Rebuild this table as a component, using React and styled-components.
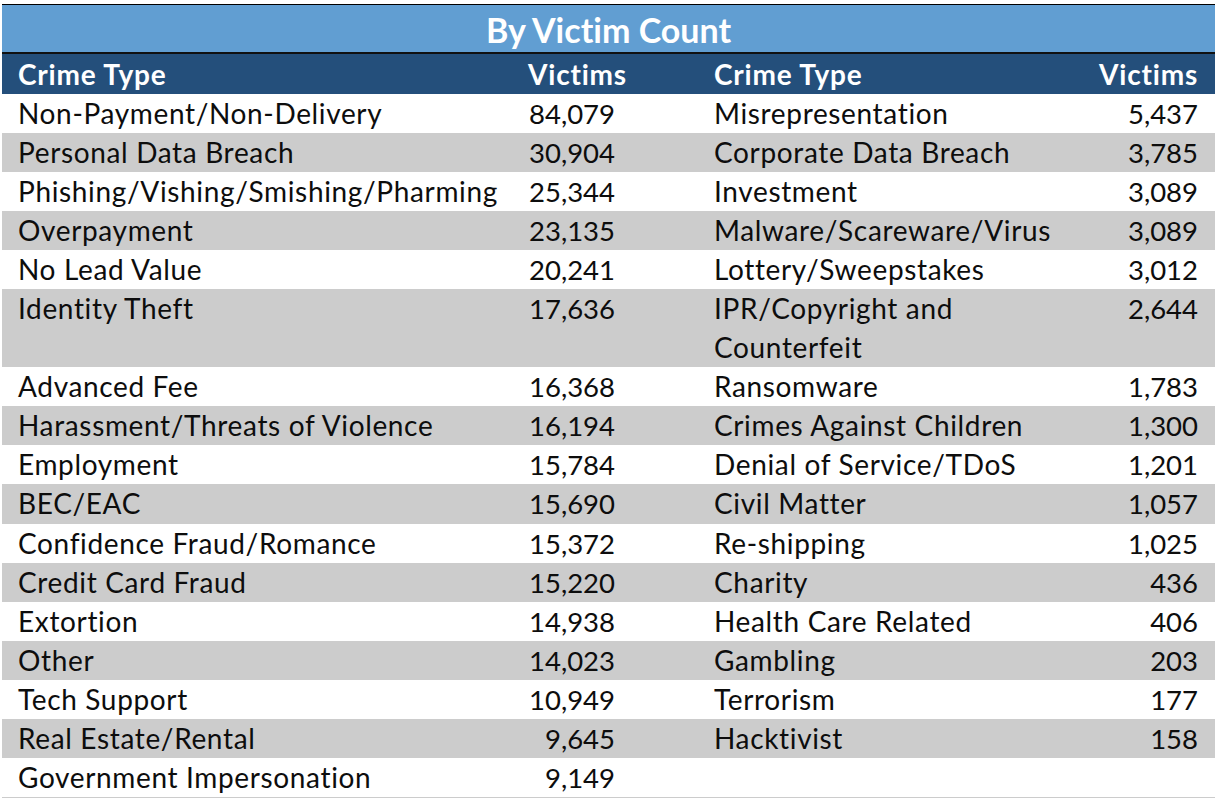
import React from "react";
import styled, { createGlobalStyle } from "styled-components";

const GlobalStyle = createGlobalStyle`
  html, body {
    margin: 0;
    padding: 0;
    background: #ffffff;
  }
  body {
    font-family: "Lato", "Open Sans", sans-serif;
    font-variant-ligatures: none;
    color: #0d0d0d;
  }
`;

const Page = styled.div`
  width: 1218px;
  height: 798px;
  overflow: hidden;
  padding: 4px 3px 0 2px;
  box-sizing: border-box;
`;

const Title = styled.div`
  height: 44.5px;
  border-top: 1.5px solid #000;
  border-bottom: 2px solid #111;
  background: #619ed2;
  color: #fff;
  font-weight: 700;
  font-size: 34px;
  display: flex;
  align-items: center;
  justify-content: center;
  padding-top: 2px;
  box-sizing: content-box;
`;

const Row = styled.div`
  display: grid;
  grid-template-columns: 518px 186px 1fr 130px;
  height: ${(p) => (p.$tall ? 78.2 : 39.1)}px;
  line-height: 39.1px;
  font-size: 28px;
  letter-spacing: 0.65px;
  background: ${(p) => (p.$grey ? "#cccccc" : "#ffffff")};
`;

const HeadRow = styled(Row)`
  height: 40px;
  line-height: 40px;
  background: #244f7b;
  color: #fff;
  font-weight: 700;
  font-size: 28px;
  letter-spacing: 0.8px;
`;

const Name = styled.div`
  padding-left: ${(p) => (p.$right ? 8 : 16)}px;
  white-space: nowrap;
`;

const Count = styled.div`
  padding-left: 8px;
  white-space: nowrap;
`;

const Num = styled.div`
  width: 87px;
  text-align: right;
  letter-spacing: 0;
  font-size: 27.5px;
`;

const CountRight = styled.div`
  text-align: right;
  padding-right: 17px;
  white-space: nowrap;
  letter-spacing: ${(p) => (p.$head ? "0.8px" : "0")};
  font-size: ${(p) => (p.$head ? 28 : 27.5)}px;
`;

const left = [
  ["Non-Payment/Non-Delivery", "84,079"],
  ["Personal Data Breach", "30,904"],
  ["Phishing/Vishing/Smishing/Pharming", "25,344"],
  ["Overpayment", "23,135"],
  ["No Lead Value", "20,241"],
  ["Identity Theft", "17,636"],
  ["Advanced Fee", "16,368"],
  ["Harassment/Threats of Violence", "16,194"],
  ["Employment", "15,784"],
  ["BEC/EAC", "15,690"],
  ["Confidence Fraud/Romance", "15,372"],
  ["Credit Card Fraud", "15,220"],
  ["Extortion", "14,938"],
  ["Other", "14,023"],
  ["Tech Support", "10,949"],
  ["Real Estate/Rental", "9,645"],
  ["Government Impersonation", "9,149"],
];

const right = [
  ["Misrepresentation", "5,437"],
  ["Corporate Data Breach", "3,785"],
  ["Investment", "3,089"],
  ["Malware/Scareware/Virus", "3,089"],
  ["Lottery/Sweepstakes", "3,012"],
  [["IPR/Copyright and", "Counterfeit"], "2,644"],
  ["Ransomware", "1,783"],
  ["Crimes Against Children", "1,300"],
  ["Denial of Service/TDoS", "1,201"],
  ["Civil Matter", "1,057"],
  ["Re-shipping", "1,025"],
  ["Charity", "436"],
  ["Health Care Related", "406"],
  ["Gambling", "203"],
  ["Terrorism", "177"],
  ["Hacktivist", "158"],
];

const App = () => {
  return (
    <Page>
      <GlobalStyle />
      <Title>By Victim Count</Title>
      <HeadRow>
        <Name>Crime Type</Name>
        <Count>Victims</Count>
        <Name $right>Crime Type</Name>
        <CountRight $head>Victims</CountRight>
      </HeadRow>
      {left.map(([name, count], i) => {
        const r = right[i];
        const label = r && Array.isArray(r[0]) ? r[0] : null;
        return (
          <Row key={name} $grey={i % 2 === 1} $tall={!!label}>
            <Name>{name}</Name>
            <Count>
              <Num>{count}</Num>
            </Count>
            <Name $right>
              {label ? (
                <>
                  {label[0]}
                  <br />
                  {label[1]}
                </>
              ) : (
                r && r[0]
              )}
            </Name>
            <CountRight>{r && r[1]}</CountRight>
          </Row>
        );
      })}
      <Row $grey />
    </Page>
  );
};

export default App;
